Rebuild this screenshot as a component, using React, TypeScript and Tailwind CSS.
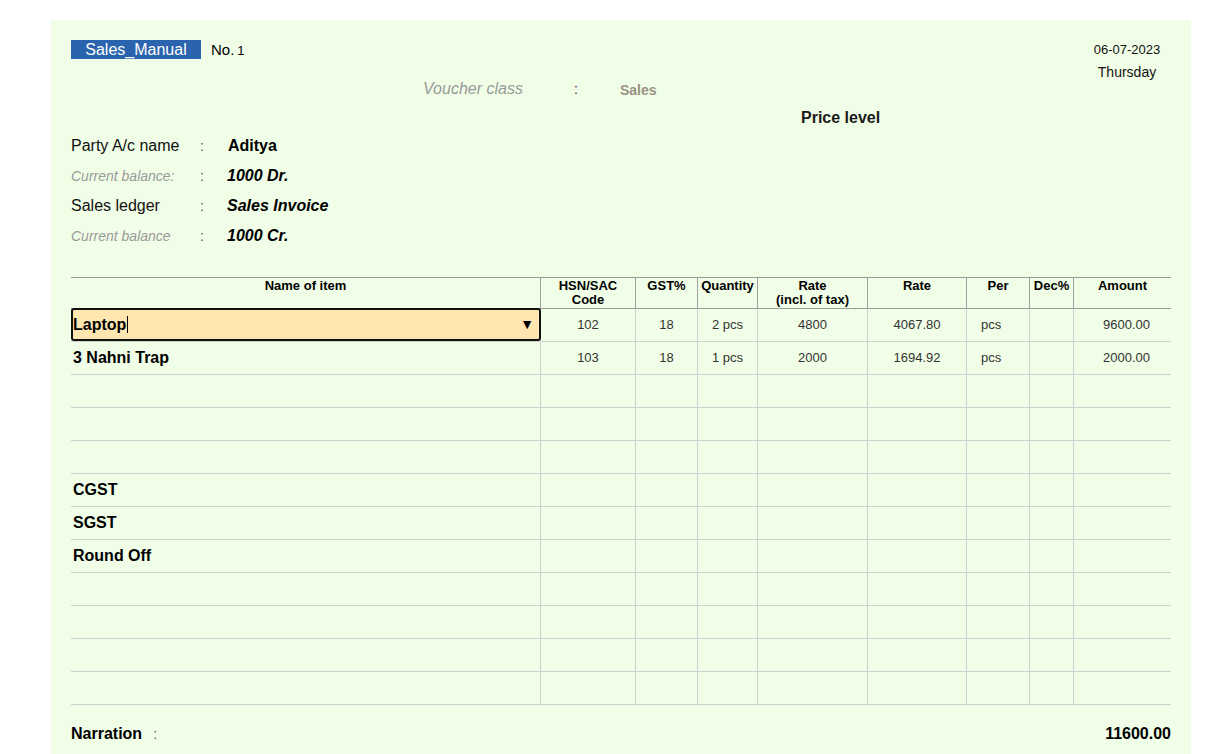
import React from "react";

const cols = [469, 95, 62, 60, 110, 99, 63, 44, 98];

type Row = {
  name?: string;
  hsn?: string;
  gst?: string;
  qty?: string;
  rateIncl?: string;
  rate?: string;
  per?: string;
  dec?: string;
  amount?: string;
  editing?: boolean;
};

const rows: Row[] = [
  { name: "Laptop", hsn: "102", gst: "18", qty: "2 pcs", rateIncl: "4800", rate: "4067.80", per: "pcs", amount: "9600.00", editing: true },
  { name: "3 Nahni Trap", hsn: "103", gst: "18", qty: "1 pcs", rateIncl: "2000", rate: "1694.92", per: "pcs", amount: "2000.00" },
  {},
  {},
  {},
  { name: "CGST" },
  { name: "SGST" },
  { name: "Round Off" },
  {},
  {},
  {},
  {},
];

function InfoRow({
  label,
  value,
  italicLabel,
  plainValue,
}: {
  label: string;
  value: string;
  italicLabel?: boolean;
  plainValue?: boolean;
}) {
  return (
    <div className="flex h-[30px] items-center">
      <div
        className={
          italicLabel
            ? "w-[129px] text-[14px] italic text-[#9a9a9a]"
            : "w-[129px] text-[16px] text-[#111]"
        }
      >
        {label}
      </div>
      <div className="w-[27px] text-[14px] text-[#555]">:</div>
      <div
        className={
          plainValue
            ? "ml-[1px] text-[16px] font-bold text-black"
            : "text-[16px] font-bold italic text-black"
        }
      >
        {value}
      </div>
    </div>
  );
}

export default function App() {
  return (
    <div className="min-h-[754px] w-[1219px] overflow-hidden bg-white font-['Liberation_Sans',Arial,sans-serif]">
      <div className="ml-[51px] mt-[20px] h-[760px] w-[1140px] bg-[#f1fee7] px-[20px] pt-[20px]">
        {/* Top */}
        <div className="flex">
          <div className="flex-1">
            <div className="flex h-[19px] items-center">
              <div className="flex h-[19px] w-[130px] items-center justify-center bg-[#2b64ae] text-[16px] leading-none text-white">
                Sales_Manual
              </div>
              <div className="ml-[10px] text-[15px] leading-none text-black">
                No.<span className="ml-[3px] text-[13px]">1</span>
              </div>
            </div>
            <div className="mt-[17px] flex h-[26px] items-center pl-[352px]">
              <div className="w-[151px] text-[16px] italic text-[#999]">Voucher class</div>
              <div className="w-[46px] text-[14px] text-[#333]">:</div>
              <div className="mt-[2px] text-[14px] font-bold text-[#9a9282]">Sales</div>
            </div>
            <div className="mt-[3px] flex h-[26px] items-center pl-[730px]">
              <div className="text-[16px] font-bold text-[#1a1a1a]">Price level</div>
            </div>
            <div className="flex flex-col">
              <InfoRow label="Party A/c name" value="Aditya" plainValue />
              <InfoRow label="Current balance:" value="1000 Dr." italicLabel />
              <InfoRow label="Sales ledger" value="Sales Invoice" />
              <InfoRow label="Current balance" value="1000 Cr." italicLabel />
            </div>
          </div>
          <div className="mr-[8px] flex w-[72px] flex-col items-center">
            <div className="mt-[1px] text-[13px] leading-[18px] text-[#111]">06-07-2023</div>
            <div className="mt-[4px] text-[14px] leading-[18px] text-[#111]">Thursday</div>
          </div>
        </div>

        {/* Table */}
        <div className="mt-[26px] w-[1100px]">
          <div className="flex h-[32px] border-y border-[#999] text-[13px] font-bold leading-[14px] text-black">
            {[
              ["Name of item"],
              ["HSN/SAC", "Code"],
              ["GST%"],
              ["Quantity"],
              ["Rate", "(incl. of tax)"],
              ["Rate"],
              ["Per"],
              ["Dec%"],
              ["Amount"],
            ].map((lines, i) => (
              <div
                key={i}
                style={{ width: cols[i] }}
                className={
                  "flex flex-col items-center pt-[1px] text-center " +
                  (i > 0 ? "border-l border-[#a0a0a0]" : "")
                }
              >
                {lines.map((l) => (
                  <div key={l}>{l}</div>
                ))}
              </div>
            ))}
          </div>
          {rows.map((r, idx) => (
            <div key={idx} className="relative flex h-[33px] border-b border-[#cfcfcf] text-[13px] text-[#333]">
              <div style={{ width: cols[0] }} className="flex items-center pl-[2px] text-[16px] font-bold text-black">
                {r.editing ? null : r.name}
              </div>
              <div style={{ width: cols[1] }} className="flex items-center justify-center border-l border-[#cfcfcf]">{r.hsn}</div>
              <div style={{ width: cols[2] }} className="flex items-center justify-center border-l border-[#cfcfcf]">{r.gst}</div>
              <div style={{ width: cols[3] }} className="flex items-center justify-center border-l border-[#cfcfcf]">{r.qty}</div>
              <div style={{ width: cols[4] }} className="flex items-center justify-center border-l border-[#cfcfcf]">{r.rateIncl}</div>
              <div style={{ width: cols[5] }} className="flex items-center justify-center border-l border-[#cfcfcf]">{r.rate}</div>
              <div style={{ width: cols[6] }} className="flex items-center border-l border-[#cfcfcf] pl-[14px]">{r.per}</div>
              <div style={{ width: cols[7] }} className="flex items-center justify-center border-l border-[#cfcfcf]">{r.dec}</div>
              <div style={{ width: cols[8] }} className="flex items-center justify-end border-l border-[#cfcfcf] pr-[21px]">{r.amount}</div>
              {r.editing && (
                <div className="absolute left-0 top-[-1px] flex h-[33px] w-[470px] items-center justify-between rounded-[3px] border-2 border-[#111] bg-[#ffe5b0] pl-[0px] pr-[5px]">
                  <span className="flex items-center text-[16px] font-bold text-black">
                    Laptop
                    <span className="ml-[1px] inline-block h-[17px] w-[1px] bg-black" />
                  </span>
                  <span className="text-[14px] text-black">▼</span>
                </div>
              )}
            </div>
          ))}
          <div className="mt-[17px] flex items-center justify-between">
            <div className="flex items-center">
              <span className="text-[16px] font-bold text-black">Narration</span>
              <span className="ml-[11px] text-[14px] text-[#557]">:</span>
            </div>
            <span className="text-[16px] font-bold text-black">11600.00</span>
          </div>
        </div>
      </div>
    </div>
  );
}
